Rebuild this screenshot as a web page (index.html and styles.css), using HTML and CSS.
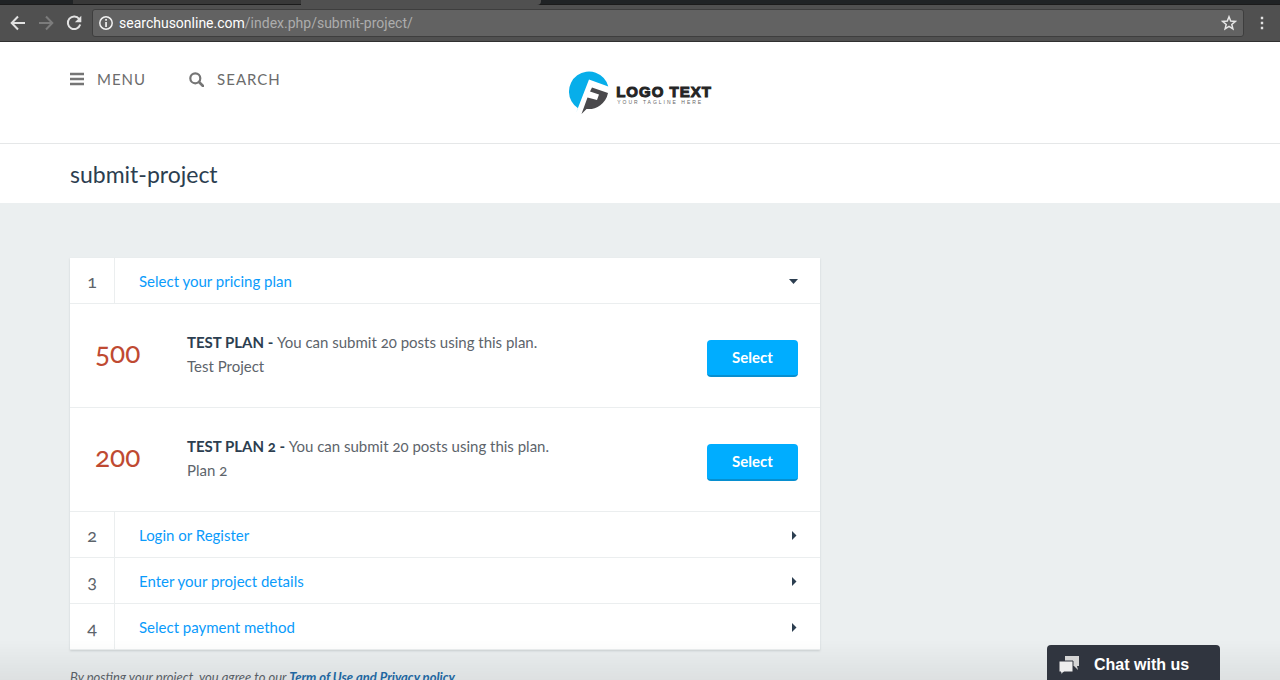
FILE: index.html
```html
<!DOCTYPE html>
<html lang="en">
<head>
<meta charset="utf-8">
<meta name="viewport" content="width=device-width, initial-scale=1">
<title>submit-project</title>
<link rel="stylesheet" href="styles.css">
</head>
<body>
<div class="browser">
  <div class="tabs"><span class="tab-edge"></span><span class="tab"></span><span class="tab tab-active"></span></div>
  <div class="toolbar">
    <button class="tool" aria-label="Back"><svg width="16" height="16" viewBox="0 0 16 16"><path d="M15 8H2M8 1.5 1.7 8 8 14.500" fill="none" stroke="#e2e2e2" stroke-width="2"/></svg></button>
    <button class="tool" aria-label="Forward"><svg width="16" height="16" viewBox="0 0 16 16"><path d="M1 8h13M8 1.500 14.300 8 8 14.500" fill="none" stroke="#7c7c7c" stroke-width="2"/></svg></button>
    <button class="tool" aria-label="Reload"><svg width="16" height="16" viewBox="0 0 16 16"><path d="M13.200 4A6.300 6.300 0 1 0 14.200 9.500" fill="none" stroke="#e2e2e2" stroke-width="2"/><path d="M15.300.8v6.400H8.900z" fill="#e2e2e2"/></svg></button>
    <div class="address">
      <svg width="14" height="14" viewBox="0 0 14 14"><circle cx="7" cy="7" r="6.200" fill="none" stroke="#f2f2f2" stroke-width="1.500"/><path d="M6.200 3h1.700v1.700H6.200zM6.200 5.900h1.700v5.100H6.200z" fill="#f2f2f2"/></svg>
      <span class="url"><span class="host">searchusonline.com</span>/index.php/submit-project/</span>
      <button class="star" aria-label="Bookmark"><svg width="16" height="16" viewBox="0 0 16 16"><path d="m8 1.800 1.700 4.300 4.600.3-3.500 3 1.100 4.500L8 11.400l-3.900 2.500 1.100-4.500-3.500-3 4.600-.3z" fill="none" stroke="#e6e6e6" stroke-width="1.500"/></svg></button>
    </div>
    <button class="more" aria-label="More"><svg width="4" height="14" viewBox="0 0 4 14"><path d="M.8.800h2.400v2.400H.8zM.8 5.800h2.400v2.400H.8zM.8 10.800h2.400v2.400H.8z" fill="#e2e2e2"/></svg></button>
  </div>
</div>

<header class="site-header">
  <div class="container header-row">
    <nav class="nav">
      <button class="nav-item"><svg width="14" height="14" viewBox="0 0 14 14"><path d="M0 2h14M0 7h14M0 12h14" stroke="#757575" stroke-width="2.600"/></svg>MENU</button>
      <button class="nav-item"><svg width="15" height="15" viewBox="0 0 15 15"><circle cx="6.300" cy="6.300" r="5" fill="none" stroke="#757575" stroke-width="2.200"/><path d="m10 10 4 4" stroke="#757575" stroke-width="2.600" stroke-linecap="round"/></svg>SEARCH</button>
    </nav>
    <a class="logo" href="#">
      <svg width="42" height="44" viewBox="0 0 42 44"><path d="M10 37.300A20 20 0 1 1 40.300 15.500L21 8.500 8 42z" fill="#07aeea"/><path d="M24 16.500 40 22A20 20 0 0 1 18.500 38L13.500 43l6-16.500 9.500 2.500 2-5.500-9-3z" fill="#4a494c"/></svg>
      <span class="logo-words"><span class="logo-name">LOGO TEXT</span><span class="tagline">YOUR TAGLINE HERE</span></span>
    </a>
  </div>
</header>
<div class="title-bar"><div class="container"><h1>submit-project</h1></div></div>

<main class="main">
  <div class="container columns">
    <div>
      <div class="card">
        <section>
          <div class="step"><span class="number">1</span><a href="#">Select your pricing plan</a><svg class="arrow" width="9" height="9" viewBox="0 0 9 9"><path d="M0 2h9L4.500 7z" fill="#2c3e50"/></svg></div>
          <div class="plan"><span class="price">500</span><p><strong>TEST PLAN - </strong>You can submit 20 posts using this plan.<br>Test Project</p><button class="select">Select</button></div>
          <div class="plan"><span class="price">200</span><p><strong>TEST PLAN 2 - </strong>You can submit 20 posts using this plan.<br>Plan 2</p><button class="select">Select</button></div>
        </section>
        <div class="step"><span class="number">2</span><a href="#">Login or Register</a><svg class="arrow" width="9" height="9" viewBox="0 0 9 9"><path d="M3 0v9l4.500-4.500z" fill="#2c3e50"/></svg></div>
        <div class="step"><span class="number">3</span><a href="#">Enter your project details</a><svg class="arrow" width="9" height="9" viewBox="0 0 9 9"><path d="M3 0v9l4.500-4.500z" fill="#2c3e50"/></svg></div>
        <div class="step"><span class="number">4</span><a href="#">Select payment method</a><svg class="arrow" width="9" height="9" viewBox="0 0 9 9"><path d="M3 0v9l4.500-4.500z" fill="#2c3e50"/></svg></div>
      </div>
      <p class="terms">By posting your project, you agree to our <a href="#">Term of Use and Privacy policy</a></p>
    </div>
  </div>
</main>
<div class="bottom-shade"></div>
<button class="chat"><svg width="22" height="20" viewBox="0 0 22 20"><path d="M7 1h14v10h-2l1 4-4-4H7z" fill="#d5d5d5"/><path d="M1 6h14v11H6l-4 3 1-3H1z" fill="#eee" stroke="#30353f"/></svg>Chat with us</button>
</body>
</html>
```

FILE: styles.css
```css
* { box-sizing: border-box; }
html { overflow: hidden; }
body { margin: 0; background: #ebeff0; color: #5d646b; font: 15px/24px Lato, "Open Sans", sans-serif; font-variant-numeric: oldstyle-nums; }
button { padding: 0; border: 0; background: none; font: inherit; color: inherit; cursor: pointer; }
a { color: #0a9bfb; text-decoration: none; }
svg { display: block; flex: none; }
h1, p { margin: 0; }
.container { max-width: 1140px; margin: 0 auto; }

.browser { background: #505050; border-bottom: 1px solid #303030; }
.tabs { display: flex; height: 5px; background: #202325; border-bottom: 1px solid #1b1b1b; }
.tab-edge { width: 73px; }
.tab { width: 228px; background: #383838; }
.tab-active { width: 240px; height: 5px; background: #505050; border-radius: 0 0 4px 0; }
.toolbar { display: flex; align-items: center; gap: 12px; height: 36px; padding: 0 16px 0 10px; }
.address { display: flex; flex: 1; align-items: center; gap: 6px; height: 28px; margin-left: -2px; padding: 0 6px; border: 1px solid #3e3e3e; border-radius: 3px; background: #626262; }
.url { flex: 1; color: #adadad; font: 14px/20px Roboto, sans-serif; }
.host { color: #fff; }
.more { width: 4px; margin-left: 4px; }

.site-header { background: #fff; border-bottom: 1px solid #e5e7e8; }
.header-row { display: grid; grid-template-columns: 1fr auto 1fr; height: 101px; padding-top: 25px; }
.nav { display: flex; align-items: flex-start; gap: 43px; color: #6c6c6c; }
.nav-item { display: flex; align-items: center; gap: 13px; letter-spacing: 1px; }
.logo { display: flex; align-items: flex-start; gap: 6px; padding-top: 4px; color: #242424; font-family: "Liberation Sans", Arial, sans-serif; }
.logo-words { display: flex; flex-direction: column; padding-top: 13px; }
.logo-name { font-size: 15px; line-height: 16px; font-weight: 900; letter-spacing: 1px; -webkit-text-stroke: 1px #242424; }
.tagline { padding-left: 1px; color: #666; font-size: 5px; line-height: 5px; letter-spacing: 2px; }
.title-bar { background: #fff; height: 59px; padding-top: 15px; }
h1 { color: #2c3e50; font-size: 23px; line-height: 30px; font-weight: 400; }

.main { padding-top: 55px; }
.columns { display: grid; grid-template-columns: 2fr 1fr; gap: 15px; }
.card { background: #fff; box-shadow: 0 1px 2px #cbd0d2; }
.step { display: flex; align-items: center; height: 46px; padding-right: 22px; border-bottom: 1px solid #ebeeef; }
.number { width: 45px; align-self: stretch; border-right: 1px solid #ebeeef; font-size: 18px; line-height: 46px; text-align: center; }
.step a { flex: 1; padding: 0 0 0 24px; }
.arrow { margin-top: 2px; }
.plan { display: flex; align-items: flex-start; height: 104px; padding: 26px 22px 0 25px; border-bottom: 1px solid #ebeeef; }
.price { width: 92px; color: #bf4a32; font-size: 28px; line-height: 44px; font-weight: 400; }
.plan p { flex: 1; }
strong { color: #2c3e50; }
.select { width: 91px; height: 37px; margin-top: 10px; padding-bottom: 2px; border-bottom: 2px solid #078fd0; border-radius: 4px; background: #00adff; color: #fff; font-weight: 700; }
.terms { padding-top: 15px; font-size: 13px; font-style: italic; }
.terms a { color: #236ca9; font-weight: 700; }

.bottom-shade { position: fixed; inset: auto 0 0; height: 40px; background: linear-gradient(transparent, rgba(0, 0, 0, .06)); pointer-events: none; }
.chat { position: fixed; right: 60px; bottom: 0; display: flex; align-items: center; gap: 14px; width: 173px; height: 35px; padding: 4px 11px 0; border-radius: 4px 4px 0 0; background: #30353f; color: #fff; font: 700 16px/20px "Liberation Sans", Arial, sans-serif; }
```
